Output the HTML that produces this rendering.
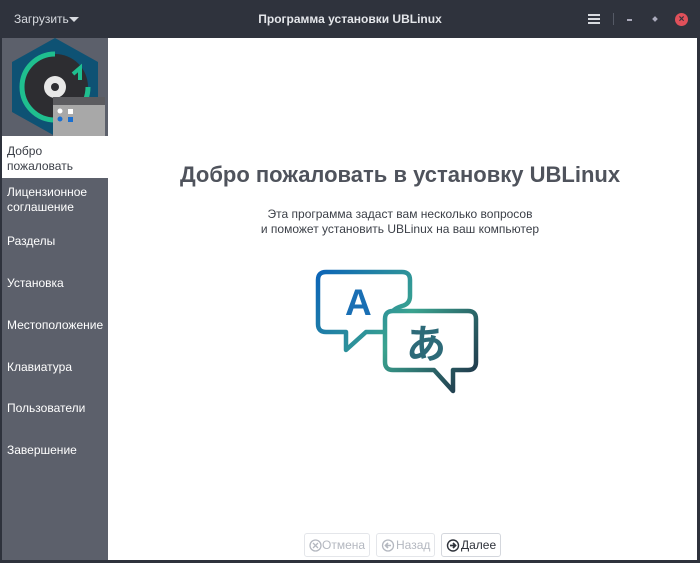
<!DOCTYPE html>
<html><head><meta charset="utf-8"><style>
*{margin:0;padding:0;box-sizing:border-box}
body{width:700px;height:563px;background:#2e323c;font-family:"Liberation Sans","DejaVu Sans",sans-serif;position:relative;overflow:hidden}
.tb{position:absolute;left:0;top:0;width:700px;height:38px;background:#2f333d;color:#e4e6ea}
.side{position:absolute;left:2px;top:38px;width:106px;height:522px;background:#5c606b}
.main{position:absolute;left:108px;top:38px;width:589px;height:522px;background:#fff}
.it{position:absolute;left:5px;color:#fff;font-size:12px;line-height:15px}
.btn{position:absolute;top:533px;height:24px;border:1px solid #e4e6ea;border-radius:3px;font-size:12px;line-height:22px;color:#b4b8c0;padding-left:4px;background:#fff}
.btn svg{vertical-align:-3px}
</style></head><body>
<div class="tb">
<div style="position:absolute;left:14px;top:12px;font-size:12px;color:#d8dbe0">Загрузить</div>
<div style="position:absolute;left:69px;top:17px;width:0;height:0;border-left:5px solid transparent;border-right:5px solid transparent;border-top:5px solid #d8dbe0"></div>
<div style="position:absolute;left:0;width:700px;top:12px;text-align:center;font-size:12px;font-weight:bold;color:#e4e6ea">Программа установки UBLinux</div>
<div style="position:absolute;left:588px;top:14px;width:12px;height:2px;background:#d8dbe0;box-shadow:0 4px 0 #d8dbe0,0 8px 0 #d8dbe0"></div>
<div style="position:absolute;left:613px;top:13px;width:1px;height:12px;background:#555a66"></div>
<div style="position:absolute;left:627px;top:19px;width:5px;height:2px;background:#aab"></div>
<div style="position:absolute;left:653px;top:17px;width:4px;height:4px;background:#aab;transform:rotate(45deg)"></div>
<div style="position:absolute;left:675px;top:13px;width:13px;height:13px;border-radius:50%;background:#e0505a;color:#2f333d;font-size:10px;line-height:13px;text-align:center;font-weight:bold">×</div>
</div>
<div class="side">
<svg width="106" height="98" viewBox="0 0 106 98" style="position:absolute;left:0;top:0">
<polygon points="53,0 96,24 96,74 53,98 10,74 10,24" fill="#0e5274"/>
<circle cx="53" cy="49" r="33" fill="#2d2d31"/>
<path d="M53 16 A33 33 0 1 0 86 49" fill="none" stroke="#1fbf8f" stroke-width="5"/>
<path d="M71 36 L78 30 L78 42" fill="none" stroke="#1fbf8f" stroke-width="4"/>
<circle cx="53" cy="49" r="11" fill="#e8e8e8"/>
<circle cx="53" cy="49" r="4" fill="#2d2d31"/>
<rect x="51" y="59" width="52" height="39" fill="#a8a8a8"/>
<rect x="51" y="59" width="52" height="8" fill="#5c5c60"/>
<circle cx="58" cy="73" r="2.5" fill="#fff"/><rect x="66" y="71" width="5" height="5" fill="#fff"/>
<circle cx="58" cy="81" r="2.5" fill="#1a6fd0"/><rect x="66" y="79" width="5" height="5" fill="#1a6fd0"/>
</svg>
<div style="position:absolute;left:0;top:98px;width:106px;height:42px;background:#fff"></div>
<div class="it" style="top:106px;color:#3a3e46">Добро<br>пожаловать</div>
<div class="it" style="top:147px">Лицензионное<br>соглашение</div>
<div class="it" style="top:196px">Разделы</div>
<div class="it" style="top:238px">Установка</div>
<div class="it" style="top:280px">Местоположение</div>
<div class="it" style="top:322px">Клавиатура</div>
<div class="it" style="top:363px">Пользователи</div>
<div class="it" style="top:405px">Завершение</div>
</div>
<div class="main">
<div style="position:absolute;left:0;width:584px;top:124px;text-align:center;font-size:22px;font-weight:bold;color:#4f535c">Добро пожаловать в установку UBLinux</div>
<div style="position:absolute;left:0;width:584px;top:169px;text-align:center;font-size:12px;line-height:15px;color:#3c4048">Эта программа задаст вам несколько вопросов<br>и поможет установить UBLinux на ваш компьютер</div>
<svg width="180" height="140" viewBox="0 0 180 140" style="position:absolute;left:200px;top:226px">
<defs><linearGradient id="g" gradientUnits="userSpaceOnUse" x1="8" y1="7" x2="170" y2="129"><stop offset="0" stop-color="#0b63b8"/><stop offset="0.5" stop-color="#3aa38f"/><stop offset="1" stop-color="#1d2a42"/></linearGradient></defs>
<g fill="none" stroke="url(#g)" stroke-width="4.5" stroke-linejoin="round" stroke-linecap="round">
<path d="M75 68 H58 L38 86 V68 H18 Q10 68 10 60 V16 Q10 8 18 8 H94 Q102 8 102 16 V32 Q102 40 94 42 Q88 44 86 46"/>
<path d="M84 47 H160 Q168 47 168 55 V98 Q168 106 160 106 H145 V127 L126 106 H85 Q77 106 77 98 V55 Q77 47 85 47 Z"/>
</g>
<text x="37" y="51" font-family="Liberation Sans,sans-serif" font-weight="bold" font-size="37" fill="#1a6fb4">A</text>
<text x="98" y="94" font-family="Noto Sans CJK JP,sans-serif" font-weight="bold" font-size="40" fill="#2d6a78">あ</text>
</svg>
</div>
<div class="btn" style="left:304px;width:66px"><svg width="13" height="13"><circle cx="6.5" cy="6.5" r="5.5" fill="none" stroke="#b4b8c0" stroke-width="1.3"/><path d="M4 4L9 9M9 4L4 9" stroke="#b4b8c0" stroke-width="1.3"/></svg>Отмена</div>
<div class="btn" style="left:376px;width:59px"><svg width="15" height="13"><circle cx="7" cy="6.5" r="5.5" fill="none" stroke="#b4b8c0" stroke-width="1.3"/><path d="M10 6.5H5M7 4L4.5 6.5L7 9" stroke="#b4b8c0" stroke-width="1.6" fill="none"/></svg>Назад</div>
<div class="btn" style="left:441px;width:60px;color:#2e323a;border-color:#d4d7dd"><svg width="15" height="13"><circle cx="7" cy="6.5" r="5.5" fill="none" stroke="#2e323a" stroke-width="1.4"/><path d="M4 6.5H9M7 4L9.5 6.5L7 9" stroke="#2e323a" stroke-width="1.7" fill="none"/></svg>Далее</div>
</body></html>
